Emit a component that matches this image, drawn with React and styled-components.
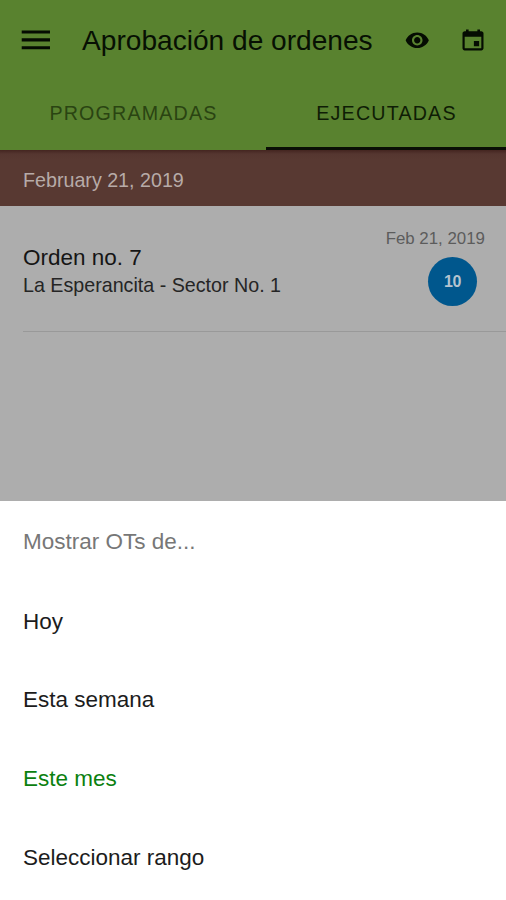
import React from 'react';
import styled, { createGlobalStyle } from 'styled-components';
import { IoMdCalendar, IoMdEye, IoMdMenu } from 'react-icons/io';

// layout is specified for a 360 wide phone
const dp = n => `${((n * 506) / 360).toFixed(2)}px`;

const GlobalStyle = createGlobalStyle`
    * {
        box-sizing: border-box;
    }

    body {
        margin: 0;
        font-family: 'Liberation Sans', Arial, sans-serif;
        background: #fff;
    }
`;

const Screen = styled.div`
    display: flex;
    flex-direction: column;
    width: 506px;
    height: 900px;
    overflow: hidden;
`;

const Page = styled.div`
    flex: 0 0 501px;
    background: #adadad;
`;

const Header = styled.header`
    height: 150px;
    background: #59822f;
    color: #071003;
`;

const Toolbar = styled.div`
    display: flex;
    align-items: center;
    height: 80px;
    padding: 0 18px 0 17px;
`;

const IconButton = styled.button`
    display: flex;
    align-items: center;
    justify-content: center;
    width: ${props => props.$width}px;
    height: 40px;
    padding: 0;
    border: 0;
    background: none;
    color: #050c02;
    font-size: ${props => props.$size}px;
`;

const Title = styled.h1`
    flex: 1;
    margin: 0;
    padding: 2px 0 0 27px;
    font-size: ${dp(20)};
    font-weight: 400;
    line-height: 32px;
    white-space: nowrap;
`;

const Tabs = styled.div`
    display: grid;
    grid-template-columns: 266px 240px;
    height: 70px;
`;

const Tab = styled.button`
    padding: 0 0 0 1px;
    border: 0;
    border-bottom: 3px solid ${props => (props.$active ? '#0a0f06' : 'transparent')};
    background: none;
    color: ${props => (props.$active ? '#0f1d05' : '#2a4412')};
    font-family: inherit;
    font-size: ${dp(14)};
    letter-spacing: 0.06em;
    line-height: 65px;
    text-transform: uppercase;
`;

const DateDivider = styled.div`
    height: 56px;
    padding-left: 23px;
    background: linear-gradient(#442520, #553630 4px, #583932 10px);
    color: #b7aba8;
    font-size: ${dp(14)};
    line-height: 60px;
`;

const Order = styled.div`
    display: flex;
    justify-content: space-between;
    height: 126px;
    margin-left: 23px;
    padding-right: 21px;
    border-bottom: 1px solid #999;
`;

const OrderInfo = styled.div`
    padding-top: 38px;
    color: #151515;
`;

const OrderName = styled.h2`
    margin: 0;
    font-size: ${dp(16)};
    font-weight: 400;
    line-height: 28px;
`;

const OrderPlace = styled.p`
    margin: 0;
    color: #252525;
    font-size: ${dp(14)};
    line-height: 26px;
`;

const OrderMeta = styled.div`
    display: flex;
    flex-direction: column;
    align-items: flex-end;
    padding-top: 23px;
`;

const OrderDate = styled.span`
    color: #5c5c5c;
    font-size: ${dp(12)};
    line-height: 20px;
`;

const Count = styled.span`
    width: 49px;
    height: 49px;
    margin: 7.5px 8px 0 0;
    border-radius: 50%;
    background: #00578d;
    color: #b4c3cf;
    font-size: 16px;
    font-weight: 700;
    letter-spacing: -0.3px;
    line-height: 49px;
    text-align: center;
`;

const Sheet = styled.div`
    flex: 1;
    background: #fff;
`;

const SheetTitle = styled.div`
    height: 81.5px;
    padding-left: 23px;
    color: #777;
    font-size: ${dp(16)};
    line-height: 82px;
`;

const SheetOption = styled.button`
    display: block;
    width: 100%;
    height: ${dp(56)};
    padding: 0 0 0 23px;
    border: 0;
    background: none;
    color: ${props => (props.$selected ? '#0b800f' : '#1c1c1c')};
    font-family: inherit;
    font-size: ${dp(16)};
    line-height: ${dp(56)};
    text-align: left;
`;

const RANGES = [
    { id: 'today', title: 'Hoy' },
    { id: 'week', title: 'Esta semana' },
    { id: 'month', title: 'Este mes' },
    { id: 'custom', title: 'Seleccionar rango' },
];

export default function App() {
    const [tab, setTab] = React.useState('done');
    const [range, setRange] = React.useState('month');

    return (
        <Screen>
            <GlobalStyle />
            <Page>
                <Header>
                    <Toolbar>
                        <IconButton $width={38} $size={37.7} aria-label="Menu">
                            <IoMdMenu />
                        </IconButton>
                        <Title>Aprobación de ordenes</Title>
                        <IconButton $width={82} $size={26.5} aria-label="Ver">
                            <IoMdEye />
                        </IconButton>
                        <IconButton $width={30} $size={28} aria-label="Fecha">
                            <IoMdCalendar />
                        </IconButton>
                    </Toolbar>
                    <Tabs>
                        <Tab $active={tab === 'planned'} onClick={() => setTab('planned')}>
                            Programadas
                        </Tab>
                        <Tab $active={tab === 'done'} onClick={() => setTab('done')}>
                            Ejecutadas
                        </Tab>
                    </Tabs>
                </Header>
                <DateDivider>February 21, 2019</DateDivider>
                <Order>
                    <OrderInfo>
                        <OrderName>Orden no. 7</OrderName>
                        <OrderPlace>La Esperancita - Sector No. 1</OrderPlace>
                    </OrderInfo>
                    <OrderMeta>
                        <OrderDate>Feb 21, 2019</OrderDate>
                        <Count>10</Count>
                    </OrderMeta>
                </Order>
            </Page>
            <Sheet>
                <SheetTitle>Mostrar OTs de...</SheetTitle>
                {RANGES.map(({ id, title }) => (
                    <SheetOption key={id} $selected={id === range} onClick={() => setRange(id)}>
                        {title}
                    </SheetOption>
                ))}
            </Sheet>
        </Screen>
    );
}
